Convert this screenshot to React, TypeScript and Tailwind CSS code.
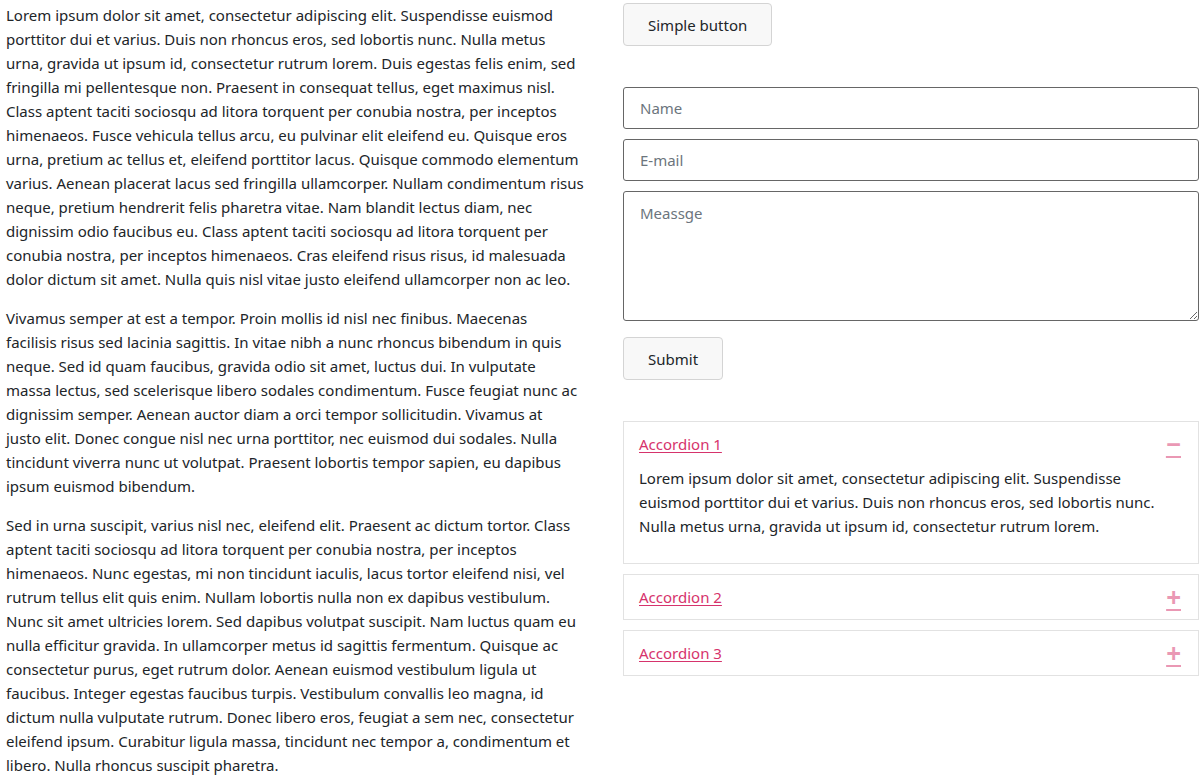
import { useState } from "react";

const PARAGRAPHS: string[][] = [
  [
    "Lorem ipsum dolor sit amet, consectetur adipiscing elit. Suspendisse euismod",
    "porttitor dui et varius. Duis non rhoncus eros, sed lobortis nunc. Nulla metus",
    "urna, gravida ut ipsum id, consectetur rutrum lorem. Duis egestas felis enim, sed",
    "fringilla mi pellentesque non. Praesent in consequat tellus, eget maximus nisl.",
    "Class aptent taciti sociosqu ad litora torquent per conubia nostra, per inceptos",
    "himenaeos. Fusce vehicula tellus arcu, eu pulvinar elit eleifend eu. Quisque eros",
    "urna, pretium ac tellus et, eleifend porttitor lacus. Quisque commodo elementum",
    "varius. Aenean placerat lacus sed fringilla ullamcorper. Nullam condimentum risus",
    "neque, pretium hendrerit felis pharetra vitae. Nam blandit lectus diam, nec",
    "dignissim odio faucibus eu. Class aptent taciti sociosqu ad litora torquent per",
    "conubia nostra, per inceptos himenaeos. Cras eleifend risus risus, id malesuada",
    "dolor dictum sit amet. Nulla quis nisl vitae justo eleifend ullamcorper non ac leo.",
  ],
  [
    "Vivamus semper at est a tempor. Proin mollis id nisl nec finibus. Maecenas",
    "facilisis risus sed lacinia sagittis. In vitae nibh a nunc rhoncus bibendum in quis",
    "neque. Sed id quam faucibus, gravida odio sit amet, luctus dui. In vulputate",
    "massa lectus, sed scelerisque libero sodales condimentum. Fusce feugiat nunc ac",
    "dignissim semper. Aenean auctor diam a orci tempor sollicitudin. Vivamus at",
    "justo elit. Donec congue nisl nec urna porttitor, nec euismod dui sodales. Nulla",
    "tincidunt viverra nunc ut volutpat. Praesent lobortis tempor sapien, eu dapibus",
    "ipsum euismod bibendum.",
  ],
  [
    "Sed in urna suscipit, varius nisl nec, eleifend elit. Praesent ac dictum tortor. Class",
    "aptent taciti sociosqu ad litora torquent per conubia nostra, per inceptos",
    "himenaeos. Nunc egestas, mi non tincidunt iaculis, lacus tortor eleifend nisi, vel",
    "rutrum tellus elit quis enim. Nullam lobortis nulla non ex dapibus vestibulum.",
    "Nunc sit amet ultricies lorem. Sed dapibus volutpat suscipit. Nam luctus quam eu",
    "nulla efficitur gravida. In ullamcorper metus id sagittis fermentum. Quisque ac",
    "consectetur purus, eget rutrum dolor. Aenean euismod vestibulum ligula ut",
    "faucibus. Integer egestas faucibus turpis. Vestibulum convallis leo magna, id",
    "dictum nulla vulputate rutrum. Donec libero eros, feugiat a sem nec, consectetur",
    "eleifend ipsum. Curabitur ligula massa, tincidunt nec tempor a, condimentum et",
    "libero. Nulla rhoncus suscipit pharetra.",
  ],
];

const ACCORDION_BODY = [
  "Lorem ipsum dolor sit amet, consectetur adipiscing elit. Suspendisse",
  "euismod porttitor dui et varius. Duis non rhoncus eros, sed lobortis nunc.",
  "Nulla metus urna, gravida ut ipsum id, consectetur rutrum lorem.",
];

const ITEMS = ["Accordion 1", "Accordion 2", "Accordion 3"];

function Lines({ lines }: { lines: string[] }) {
  return (
    <>
      {lines.map((line, i) => (
        <span key={i} className="block whitespace-nowrap">
          {line}
        </span>
      ))}
    </>
  );
}

export default function App() {
  const [open, setOpen] = useState(0);

  return (
    <div
      className="flex min-h-screen bg-white pl-[6px] pt-[3px] text-[15px] leading-6 text-[#212529]"
      style={{ fontFamily: "'Noto Sans', sans-serif" }}
    >
      <div className="w-[582px] shrink-0">
        {PARAGRAPHS.map((p, i) => (
          <p key={i} className="mb-[15px]">
            <Lines lines={p} />
          </p>
        ))}
      </div>

      <div className="ml-[35px] flex w-[576px] shrink-0 flex-col">
        <div>
          <button className="h-[43px] rounded border border-[#d4d4d4] bg-[#f8f8f8] px-6">
            Simple button
          </button>
        </div>

        <form className="mt-[41px] flex flex-col gap-[10px]" onSubmit={(e) => e.preventDefault()}>
          <input
            placeholder="Name"
            className="h-[42px] rounded-[3px] border border-[#666] px-4 placeholder:text-[#6c757d]"
          />
          <input
            placeholder="E-mail"
            className="h-[42px] rounded-[3px] border border-[#666] px-4 placeholder:text-[#6c757d]"
          />
          <textarea
            placeholder="Meassge"
            className="h-[130px] rounded-[3px] border border-[#666] px-4 py-[9px] placeholder:text-[#6c757d]"
          />
          <div className="mt-[6px]">
            <button className="h-[43px] rounded border border-[#d4d4d4] bg-[#f8f8f8] px-6">
              Submit
            </button>
          </div>
        </form>

        <div className="mt-[41px] flex flex-col gap-[10px]">
          {ITEMS.map((title, i) => (
            <div key={title} className="border border-[#e2e2e2] px-[15px] py-[10px]">
              <div className="flex items-center justify-between">
                <a
                  href="#"
                  onClick={(e) => {
                    e.preventDefault();
                    setOpen(open === i ? -1 : i);
                  }}
                  className="text-[#d6336c] underline underline-offset-2"
                >
                  {title}
                </a>
                <span className="mr-[2px] text-center text-[26px] font-bold leading-6 text-[#d6336c] underline opacity-50">
                  {open === i ? "−" : "+"}
                </span>
              </div>
              {open === i && (
                <div className="mt-[10px] pb-[15px]">
                  <Lines lines={ACCORDION_BODY} />
                </div>
              )}
            </div>
          ))}
        </div>
      </div>
    </div>
  );
}
